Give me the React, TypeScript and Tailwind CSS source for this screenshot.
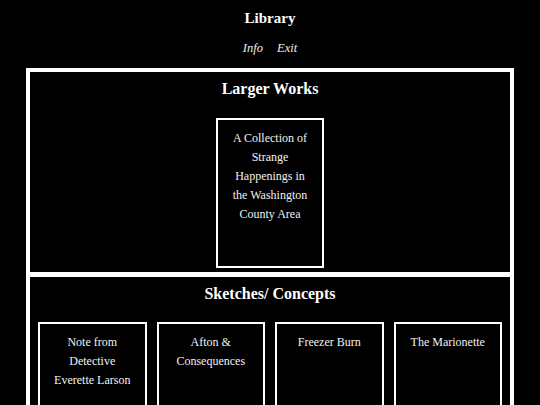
const larger = ["A Collection of Strange Happenings in the Washington County Area"];

const sketches = [
  "Note from Detective Everette Larson",
  "Afton & Consequences",
  "Freezer Burn",
  "The Marionette",
];

function StoryCard({ title }: { title: string }) {
  return (
    <a
      href="#"
      className="block h-[150px] border-2 border-white px-[10px] pt-[9px] text-center text-[12px] leading-[19px] text-[#f2f2f2]"
    >
      {title}
    </a>
  );
}

export default function App() {
  return (
    <div className="min-h-screen bg-black pb-10 font-['Liberation_Serif'] text-white">
      <header className="text-center">
        <h1 className="pt-[9px] text-[15px] font-bold leading-[18px]">Library</h1>
        <nav className="mt-[12px] flex justify-center gap-[14px] text-[12.5px] italic leading-[18px] text-[#eee]">
          <a href="#">Info</a>
          <a href="#">Exit</a>
        </nav>
      </header>

      <main className="mx-[26px] mt-[11px] border-4 border-white">
        <section className="border-b-[5px] border-white pb-[4px] pt-[7px]">
          <h2 className="text-center text-[16px] font-bold leading-[20px]">Larger Works</h2>
          <div className="mt-[19px] flex justify-center">
            {larger.map((t) => (
              <div key={t} className="w-[108px]">
                <StoryCard title={t} />
              </div>
            ))}
          </div>
        </section>

        <section className="px-2 pt-[7px] pb-4">
          <h2 className="text-center text-[16px] font-bold leading-[20px]">Sketches/ Concepts</h2>
          <div className="mt-[18px] grid grid-cols-4 gap-[10px]">
            {sketches.map((t) => (
              <StoryCard key={t} title={t} />
            ))}
          </div>
        </section>
      </main>
    </div>
  );
}
